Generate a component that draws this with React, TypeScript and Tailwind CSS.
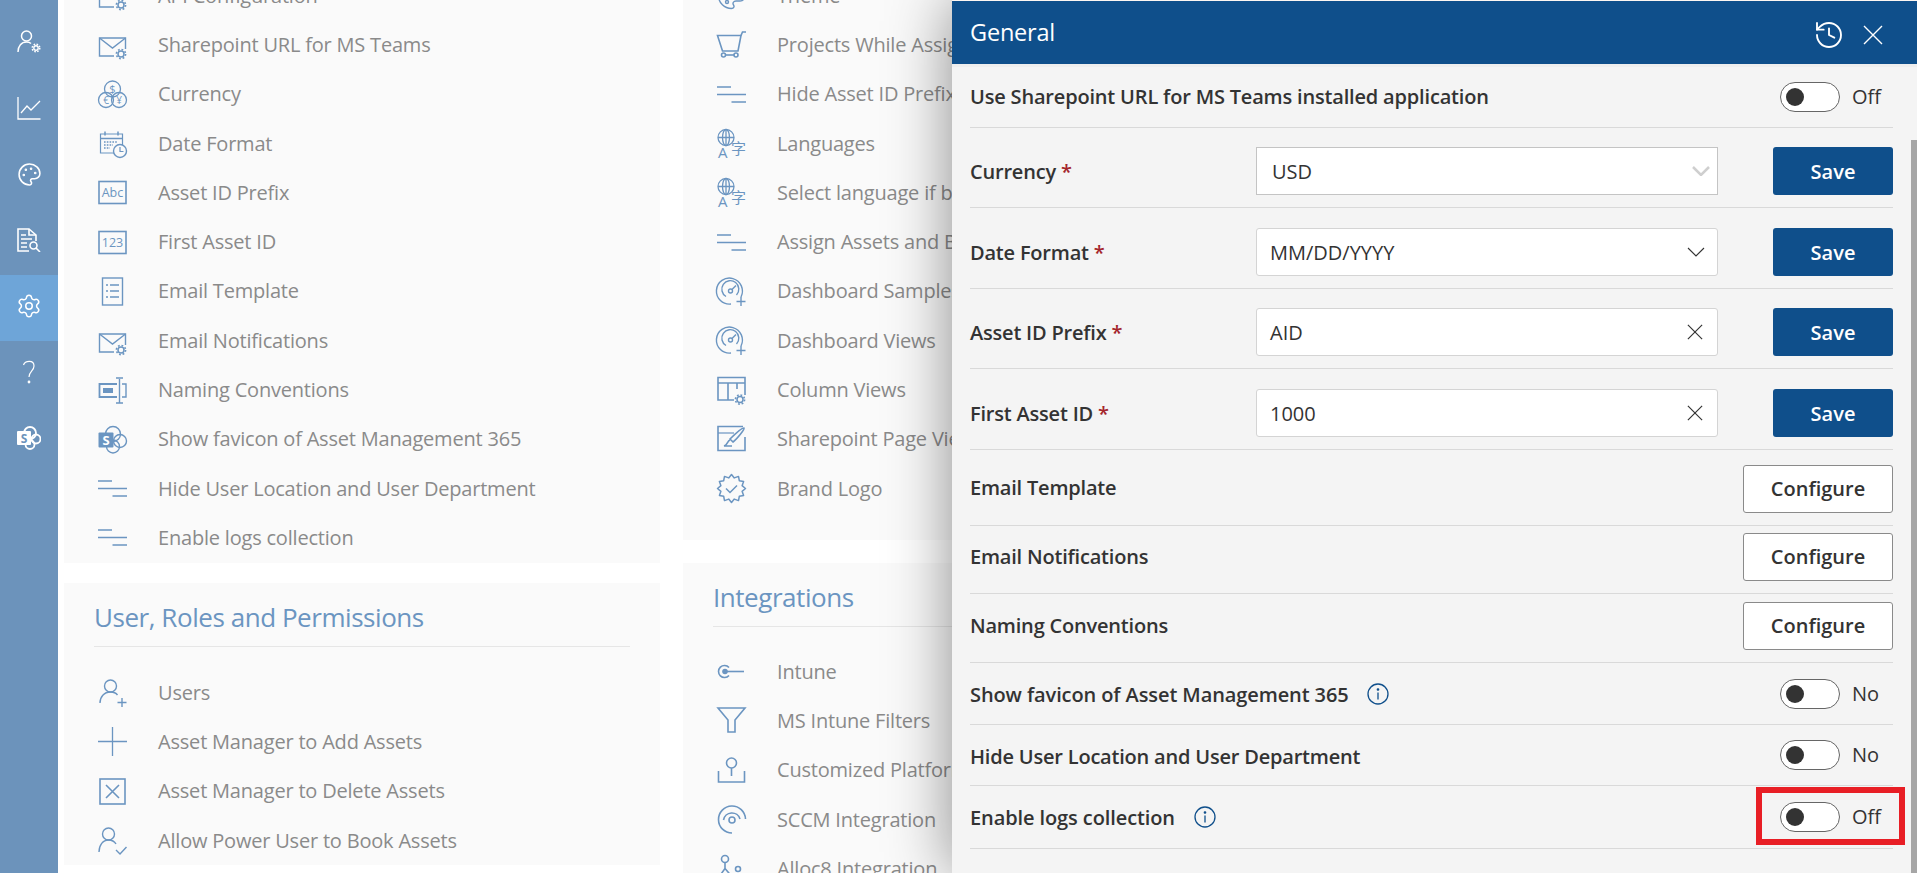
import { History, Palette, Settings } from "lucide-react";
import type { ReactNode } from "react";

const Ico = ({ children, sw = 1.4 }: { children: ReactNode; sw?: number }) => (
  <svg
    viewBox="0 0 29 29"
    className="h-[29px] w-[29px] shrink-0 overflow-visible"
    fill="none"
    stroke="currentColor"
    strokeWidth={sw}
  >
    {children}
  </svg>
);

// small cog used on several icons
const Cog = ({ x, y, bg = "#fafafa" }: { x: number; y: number; bg?: string }) => (
  <g>
    <circle cx={x} cy={y} r={5.5} fill={bg} stroke="none" />
    <circle cx={x} cy={y} r={3} strokeWidth={1.5} />
    <circle cx={x} cy={y} r={4.6} strokeWidth={1.6} strokeDasharray="1.8 1.8" />
  </g>
);

const MailGear = () => (
  <Ico>
    <path d="M16 26H1.5V8h26v11" />
    <path d="M1.5 8l13 10 13-10" />
    <Cog x={23} y={24} />
  </Ico>
);
const Coins = () => (
  <Ico sw={1.3}>
    <circle cx={14.5} cy={9} r={8} />
    <circle cx={8} cy={20} r={7.5} />
    <circle cx={21} cy={20} r={7.5} />
    <text x={14.5} y={13} fontSize={11} textAnchor="middle" fill="currentColor" stroke="none">$</text>
    <text x={8} y={24} fontSize={10} textAnchor="middle" fill="currentColor" stroke="none">€</text>
    <text x={21} y={24} fontSize={10} textAnchor="middle" fill="currentColor" stroke="none">¥</text>
  </Ico>
);
const CalendarClock = () => (
  <Ico sw={1.2}>
    <path d="M16 24H2.5V5h22v11" />
    <path d="M2.5 9.5h22M7 2.5v4M20 2.5v4" strokeWidth={1.5} />
    <path d="M6 13h14M6 16h9M6 19h6" strokeDasharray="1.6 1.2" strokeWidth={1.5} />
    <circle cx={22} cy={22} r={6.5} fill="#fafafa" strokeWidth={1.4} />
    <path d="M22 18v4.5h3.5" />
  </Ico>
);
const TextBox = ({ label }: { label: string }) => (
  <Ico sw={1.6}>
    <rect x={1} y={3.5} width={27} height={22} />
    <text x={14.5} y={19} fontSize={12.5} textAnchor="middle" fill="currentColor" stroke="none">
      {label}
    </text>
  </Ico>
);
const DocList = () => (
  <Ico sw={1.4}>
    <rect x={4.5} y={1} width={20} height={27} />
    <path d="M8 8h2M12 8h9M8 14h2M12 14h9M8 20h2M12 20h9" />
  </Ico>
);
const Naming = () => (
  <Ico sw={1.4}>
    <path d="M19 8H1.5v13H19" strokeWidth={1.8} />
    <rect x={5} y={12} width={10} height={5} fill="currentColor" stroke="none" />
    <path d="M24 8h4v13h-4" strokeWidth={1.4} />
    <path d="M21.5 3v24M18 2h7M18 27h7" />
  </Ico>
);
const SharePoint = () => (
  <Ico sw={1.4}>
    <circle cx={15} cy={9} r={7.5} />
    <circle cx={22} cy={16} r={6.5} />
    <circle cx={15} cy={21.5} r={6.5} />
    <rect x={0.5} y={7.5} width={15} height={15} fill="currentColor" stroke="none" rx={1} />
    <text x={8} y={19.5} fontSize={13} fontWeight={700} textAnchor="middle" fill="#fff" stroke="none">S</text>
  </Ico>
);
const Lines = () => (
  <Ico sw={1.6}>
    <path d="M0 7h14M0 14.5h29M14.5 22H29" />
  </Ico>
);
const Cart = () => (
  <Ico sw={1.6}>
    <path d="M0.5 5.5H24L21 21H5.5L0.5 5.5z" />
    <path d="M24 5.5L25.5 2H29" />
    <circle cx={6.5} cy={25} r={2} />
    <circle cx={19} cy={25} r={2} />
    <path d="M8.5 25h8.5" />
  </Ico>
);
const Lang = () => (
  <Ico sw={1.3}>
    <circle cx={9} cy={8.5} r={8} />
    <ellipse cx={9} cy={8.5} rx={3.5} ry={8} />
    <path d="M1 8.5h16M9 .5v16" />
    <text x={1} y={29} fontSize={15} fill="currentColor" stroke="none">A</text>
    <text x={14} y={24.5} fontSize={15} fill="currentColor" stroke="none" fontFamily="'Noto Sans CJK SC'">字</text>
  </Ico>
);
const Gauge = () => (
  <Ico sw={1.4}>
    <path d="M24 20A13 13 0 1 0 14 27" />
    <path d="M19.5 18A8.5 8.5 0 1 0 9 19.5" />
    <circle cx={13.5} cy={14} r={2} />
    <path d="M15 12.5l4-4" />
    <path d="M24 20v9M19.5 24.5h9" />
  </Ico>
);
const TableGear = () => (
  <Ico sw={1.6}>
    <path d="M17 24H1V1.5h27V19" />
    <path d="M1 7h27M11 7v17M20 7v6" />
    <Cog x={23} y={23.5} />
  </Ico>
);
const Brush = () => (
  <Ico sw={1.6}>
    <path d="M26 1.5H1v24h27V12" />
    <path d="M1 8h16" strokeWidth={1.2} />
    <path d="M27 3c1 1-7 11-11 14l-3-3C16 11 25 2 27 3z" />
    <path d="M13 15c-3 1-2 5-6 6h8" />
  </Ico>
);
const starPoints = Array.from({ length: 24 }, (_, i) => {
  const a = (i * Math.PI) / 12;
  const r = i % 2 === 0 ? 14 : 11;
  return `${(14.5 + r * Math.sin(a)).toFixed(1)},${(14.5 - r * Math.cos(a)).toFixed(1)}`;
}).join(" ");
const Badge = () => (
  <Ico sw={1.5}>
    <polygon points={starPoints} strokeLinejoin="round" />
    <path d="M9 14.5l4 4 7-7" />
  </Ico>
);
const ThemeIcon = () => (
  <Ico sw={1.4}>
    <path d="M14.5 1.500C7 1.500 1.500 7 1.500 14.500s6 13 13 13c2.500 0 3-2 2-3.500-1.200-2 0-4 2.500-4h4c3 0 4.500-2.500 4.500-5.500 0-7-6-13-13-13z" />
    <circle cx={10} cy={21} r={1.500} />
  </Ico>
);
const UserPlus = () => (
  <Ico sw={1.4}>
    <circle cx={12.5} cy={8} r={6} />
    <path d="M2 25c0-6 4-11 10.500-11 3 0 5.500 1 7 3" />
    <path d="M24 20v9M19.500 24.500h9" />
  </Ico>
);
const PlusIco = () => (
  <Ico sw={1.3}>
    <path d="M14.500 0v29M0 14.500h29" />
  </Ico>
);
const XBox = () => (
  <Ico sw={1.6}>
    <rect x={2} y={2} width={25} height={25} />
    <path d="M8 8l13 13M21 8L8 21" />
  </Ico>
);
const UserCheck = () => (
  <Ico sw={1.4}>
    <circle cx={10.500} cy={8} r={6} />
    <path d="M1 26c0-7 4-12 9.500-12 3.500 0 6 1.500 7.500 4" />
    <path d="M18 24l4 4 6.500-7" />
  </Ico>
);
const Intune = () => (
  <Ico sw={1.6}>
    <path d="M12 10.500a6 6 0 1 0 0 8" />
    <circle cx={8} cy={14.500} r={2.800} fill="currentColor" stroke="none" />
    <path d="M8 14.500h19" />
  </Ico>
);
const Filter = () => (
  <Ico sw={1.6}>
    <path d="M1 2h27L18 14v12h-7V14L1 2z" />
  </Ico>
);
const Platform = () => (
  <Ico sw={1.6}>
    <circle cx={14.500} cy={7} r={5} />
    <path d="M14.500 12v8M1.500 15v11h26V15" />
  </Ico>
);
const Arcs = () => (
  <Ico sw={1.6}>
    <path d="M28.500 14A13.500 13.500 0 1 0 15 28" />
    <path d="M23 14A8.500 8.500 0 0 0 6.500 15" />
    <circle cx={15} cy={15} r={3} />
  </Ico>
);
const Alloc = () => (
  <Ico sw={1.6}>
    <circle cx={8} cy={5} r={3.500} />
    <path d="M8 8.500v6l6 7M8 14.500l-5 7" />
    <circle cx={21} cy={15} r={2.500} />
  </Ico>
);

type Item = { icon: ReactNode; label: string };

const general: Item[] = [
  { icon: <MailGear />, label: "API Configuration" },
  { icon: <MailGear />, label: "Sharepoint URL for MS Teams" },
  { icon: <Coins />, label: "Currency" },
  { icon: <CalendarClock />, label: "Date Format" },
  { icon: <TextBox label="Abc" />, label: "Asset ID Prefix" },
  { icon: <TextBox label="123" />, label: "First Asset ID" },
  { icon: <DocList />, label: "Email Template" },
  { icon: <MailGear />, label: "Email Notifications" },
  { icon: <Naming />, label: "Naming Conventions" },
  { icon: <SharePoint />, label: "Show favicon of Asset Management 365" },
  { icon: <Lines />, label: "Hide User Location and User Department" },
  { icon: <Lines />, label: "Enable logs collection" },
];

const users: Item[] = [
  { icon: <UserPlus />, label: "Users" },
  { icon: <PlusIco />, label: "Asset Manager to Add Assets" },
  { icon: <XBox />, label: "Asset Manager to Delete Assets" },
  { icon: <UserCheck />, label: "Allow Power User to Book Assets" },
];

const appearance: Item[] = [
  { icon: <ThemeIcon />, label: "Theme" },
  { icon: <Cart />, label: "Projects While Assigning Assets" },
  { icon: <Lines />, label: "Hide Asset ID Prefix" },
  { icon: <Lang />, label: "Languages" },
  { icon: <Lang />, label: "Select language if browser language" },
  { icon: <Lines />, label: "Assign Assets and Book Assets" },
  { icon: <Gauge />, label: "Dashboard Samples" },
  { icon: <Gauge />, label: "Dashboard Views" },
  { icon: <TableGear />, label: "Column Views" },
  { icon: <Brush />, label: "Sharepoint Page Views" },
  { icon: <Badge />, label: "Brand Logo" },
];

const integrations: Item[] = [
  { icon: <Intune />, label: "Intune" },
  { icon: <Filter />, label: "MS Intune Filters" },
  { icon: <Platform />, label: "Customized Platforms" },
  { icon: <Arcs />, label: "SCCM Integration" },
  { icon: <Alloc />, label: "Alloc8 Integration" },
];

const Row = ({ item }: { item: Item }) => (
  <div className="flex h-[49.3px] items-center whitespace-nowrap text-[#8a8a8a]">
    <span className="flex w-[60px] shrink-0 text-[#6b95c1]">{item.icon}</span>
    <span className="text-[20px] tracking-[-0.2px]">{item.label}</span>
  </div>
);

const Heading = ({ children }: { children: ReactNode }) => (
  <div className="flex h-[64px] items-end border-b border-[#e6e6e6] pb-[9px] text-[26px] tracking-[-0.45px] text-[#6b95c1]">
    {children}
  </div>
);

const Sidebar = () => {
  const nav = [
    <svg key="u" viewBox="0 0 24 24" className="h-6 w-6" fill="none" stroke="currentColor" strokeWidth={1.5}>
      <circle cx={9.5} cy={6} r={5} />
      <path d="M1 22c0-6 3.500-10 8.500-10 2 0 3.500.5 4.500 1.500" />
      <circle cx={19} cy={18} r={2.200} strokeWidth={1.400} />
      <circle cx={19} cy={18} r={3.800} strokeWidth={1.500} strokeDasharray="1.600 1.400" />
    </svg>,
    <svg key="c" viewBox="0 0 24 24" className="h-6 w-6" fill="none" stroke="currentColor" strokeWidth={1.3}>
      <path d="M1 1v22h22.500" />
      <path d="M4 17l6-7 4 4 9-9" />
    </svg>,
    <Palette key="p" size={25} strokeWidth={1.5} />,
    <svg key="d" viewBox="0 0 24 24" className="h-6 w-6" fill="none" stroke="currentColor" strokeWidth={1.600}>
      <path d="M12 23H1V1h11l7 6v6" />
      <path d="M12 1v6h7M4 7h5M4 11h11M4 15h6M4 19h6" />
      <circle cx={16.500} cy={17.500} r={3.500} />
      <path d="M19 20l4 4" />
    </svg>,
    <Settings key="s" size={26} strokeWidth={1.4} />,
    <svg key="q" viewBox="0 0 24 24" className="h-6 w-6" fill="none" stroke="currentColor" strokeWidth={1.200}>
      <path d="M6.500 5C8 .5 17-.5 17 6c0 5-5 5.500-5 11" />
      <circle cx={12} cy={22} r={.8} fill="currentColor" />
    </svg>,
    <svg key="sp" viewBox="0 0 24 24" className="h-6 w-6" fill="none" stroke="currentColor" strokeWidth={1.800}>
      <circle cx={13} cy={7} r={6} />
      <circle cx={19} cy={13} r={4.500} />
      <circle cx={13} cy={18.500} r={4.500} />
      <rect x={0} y={5} width={14} height={14} rx={1} fill="currentColor" stroke="none" />
      <text x={7} y={16.500} fontSize={12} fontWeight={700} textAnchor="middle" fill="#6c93bb" stroke="none">S</text>
    </svg>,
  ];
  return (
    <aside className="flex h-full w-[58px] shrink-0 flex-col bg-[#6c93bb] pt-[11px] text-white">
      {nav.map((icon, i) => (
        <div
          key={i}
          className={`flex h-[66px] items-center justify-center pb-1 ${i === 4 ? "bg-[#6ea5d8]" : ""}`}
        >
          {icon}
        </div>
      ))}
    </aside>
  );
};

const Toggle = ({ label }: { label: string }) => (
  <div className="ml-auto flex w-[113px] items-center gap-3 text-[#333]">
    <span className="flex h-[30px] w-[60px] items-center rounded-full border border-[#666] bg-white pl-[5px]">
      <span className="h-[18px] w-[18px] rounded-full bg-[#333]" />
    </span>
    <span className="text-[20px]">{label}</span>
  </div>
);

const Info = () => (
  <svg viewBox="0 0 22 22" className="h-[22px] w-[22px] text-[#0f4f8b]" fill="none" stroke="currentColor" strokeWidth={1.3}>
    <circle cx={11} cy={11} r={10} />
    <path d="M11 9.500v7" />
    <circle cx={11} cy={6.500} r={.7} fill="currentColor" />
  </svg>
);

const X = () => (
  <svg viewBox="0 0 18 18" className="mr-[4px] h-4 w-4 text-[#333]" fill="none" stroke="currentColor" strokeWidth={1.3}>
    <path d="M1 1l16 16M17 1L1 17" />
  </svg>
);

const Chevron = ({ light }: { light?: boolean }) => (
  <svg
    viewBox="0 0 18 10"
    className={`w-[18px] ${light ? "-mr-[3px] text-[#cfcfcf]" : "mr-[2px] text-[#333]"}`}
    fill="none"
    stroke="currentColor"
    strokeWidth={light ? 2.500 : 1.100}
  >
    <path d="M1 1l8 8 8-8" />
  </svg>
);

const Field = ({
  label,
  value,
  icon,
  square,
  h,
}: {
  label: string;
  value: string;
  icon: ReactNode;
  square?: boolean;
  h: string;
}) => (
  <div className={`flex items-center border-b border-[#d9d9d9] ${h}`}>
    <div className="w-[286px] pt-[3px] text-[20px] font-semibold tracking-[-0.2px] text-[#333]">
      {label} <span className="text-[#a4262c]">*</span>
    </div>
    <div
      className={`flex h-[48px] w-[462px] items-center justify-between bg-white pr-[10px] text-[20px] text-[#333] ${
        square ? "border border-[#c4c4c4] pl-[15px]" : "rounded-[3px] border border-[#d4d4d4] pl-[13px]"
      }`}
    >
      <span className="pt-[3px]">{value}</span>
      {icon}
    </div>
    <button className="ml-auto h-[48px] w-[120px] rounded-[3px] bg-[#0f4f8b] pt-[3px] text-[20px] font-semibold text-white">
      Save
    </button>
  </div>
);

const ConfigRow = ({ label, cls, textCls }: { label: string; cls: string; textCls?: string }) => (
  <div className={`flex items-start border-b border-[#d9d9d9] ${cls}`}>
    <div className="flex h-[48px] w-full items-center justify-between">
      <span className={`text-[20px] font-semibold tracking-[-0.2px] text-[#333] ${textCls ?? ""}`}>{label}</span>
      <button className="h-[48px] w-[150px] rounded-[3px] border border-[#8a8a8a] bg-white text-[20px] font-semibold text-[#333]">
        Configure
      </button>
    </div>
  </div>
);

const Panel = () => (
  <section className="absolute inset-y-0 right-0 w-[965px] border-t border-[#fdf6f2] bg-[#f4f4f4] shadow-[0_0_60px_rgba(0,0,0,0.45)]">
    <header className="flex h-[63px] items-center justify-between bg-[#0f4f8b] pl-[18px] pr-[34px] text-white">
      <span className="text-[23.5px] tracking-[-0.2px]">General</span>
      <div className="mt-1 flex items-center gap-[18px]">
        <History size={32} strokeWidth={1.4} />
        <svg viewBox="0 0 20 20" className="h-5 w-5" fill="none" stroke="currentColor" strokeWidth={1.4}>
          <path d="M1 1l18 18M19 1L1 19" />
        </svg>
      </div>
    </header>
    <div className="border-t-[3px] border-[#eeeeee] pl-[18px] pr-[24px]">
      <div className="flex h-[61px] items-center border-b border-[#d9d9d9]">
        <span className="text-[20px] font-semibold tracking-[-0.18px] text-[#333]">
          Use Sharepoint URL for MS Teams installed application
        </span>
        <Toggle label="Off" />
      </div>
      <Field label="Currency" value="USD" square h="h-[80px] pt-[6px]" icon={<Chevron light />} />
      <Field label="Date Format" value="MM/DD/YYYY" h="h-[81px] pt-[7px]" icon={<Chevron />} />
      <Field label="Asset ID Prefix" value="AID" h="h-[80px] pt-[6px]" icon={<X />} />
      <Field label="First Asset ID" value="1000" h="h-[81px] pt-[7px]" icon={<X />} />
      <ConfigRow label="Email Template" cls="h-[76px] pt-[15px]" textCls="-mt-[3px]" />
      <ConfigRow label="Email Notifications" cls="h-[68px] pt-[7px]" />
      <ConfigRow label="Naming Conventions" cls="h-[69px] pt-[8px]" textCls="-mt-[1px]" />
      <div className="flex h-[62px] items-center border-b border-[#d9d9d9]">
        <span className="pt-[2px] text-[20px] font-semibold tracking-[-0.1px] text-[#333]">
          Show favicon of Asset Management 365
        </span>
        <span className="ml-[18px] flex">
          <Info />
        </span>
        <Toggle label="No" />
      </div>
      <div className="flex h-[61px] items-center border-b border-[#d9d9d9]">
        <span className="pt-[3px] text-[20px] font-semibold tracking-[-0.2px] text-[#333]">
          Hide User Location and User Department
        </span>
        <Toggle label="No" />
      </div>
      <div className="relative flex h-[63px] items-center border-b border-[#d9d9d9]">
        <span className="pt-[2px] text-[20px] font-semibold tracking-[-0.1px] text-[#333]">Enable logs collection</span>
        <span className="ml-[19px] flex">
          <Info />
        </span>
        <Toggle label="Off" />
        <div className="absolute -right-3 top-[1px] h-[58px] w-[149px] border-[6px] border-[#e81e25]" />
      </div>
    </div>
    <div className="absolute bottom-0 right-0 top-[139px] w-[6px] bg-[#a6a6a6]" />
  </section>
);

export default function App() {
  return (
    <div className="relative flex h-[873px] w-[1917px] overflow-hidden bg-white font-['Open_Sans',sans-serif]">
      <Sidebar />
      <main className="ml-[6px] flex gap-[23px]">
        <div className="-mt-[29px] flex w-[596px] flex-col gap-[20px]">
          <div className="h-[592px] shrink-0 bg-[#fafafa] pl-[34px]">
            {general.map((it) => (
              <Row key={it.label} item={it} />
            ))}
          </div>
          <div className="shrink-0 bg-[#fafafa] px-[30px]">
            <Heading>User, Roles and Permissions</Heading>
            <div className="pl-[4px] pt-[21px]">
              {users.map((it) => (
                <Row key={it.label} item={it} />
              ))}
            </div>
          </div>
        </div>
        <div className="-mt-[29px] flex w-[596px] flex-col gap-[23px]">
          <div className="h-[569px] shrink-0 bg-[#fafafa] pl-[34px]">
            {appearance.map((it) => (
              <Row key={it.label} item={it} />
            ))}
          </div>
          <div className="shrink-0 bg-[#fafafa] px-[30px]">
            <Heading>Integrations</Heading>
            <div className="pl-[4px] pt-[20px]">
              {integrations.map((it) => (
                <Row key={it.label} item={it} />
              ))}
            </div>
          </div>
        </div>
      </main>
      <Panel />
    </div>
  );
}
